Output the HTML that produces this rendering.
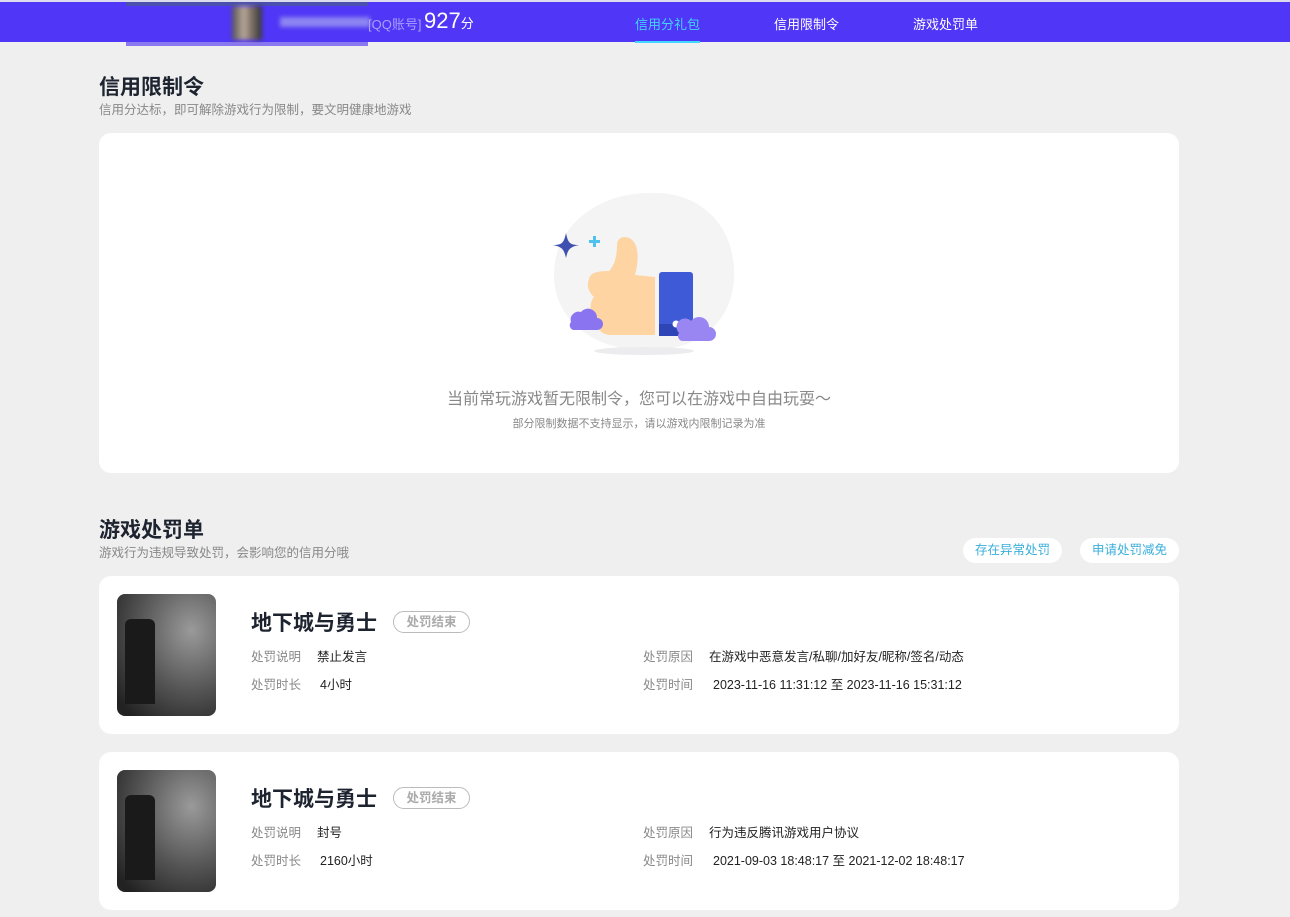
<!DOCTYPE html>
<html><head><meta charset="utf-8"><style>
*{margin:0;padding:0;box-sizing:border-box}
body{width:1290px;height:917px;overflow:hidden;background:#efefef;font-family:"Liberation Sans","Noto Sans CJK SC",sans-serif;color:#222}
.nav{position:absolute;left:0;top:0;width:1290px;height:42px;background:#5036f6;border-top:2px solid #dcdcec}
.nav .ul{position:absolute;left:126px;top:0;width:242px;height:4px;background:#4a4fb0}
.nav .ul2{position:absolute;left:126px;top:40px;width:242px;height:4px;background:#8a78f0}
.av{position:absolute;left:232px;top:4px;width:30px;height:34px;background:linear-gradient(90deg,#555 0,#b8a898 40%,#8a7a70 60%,#333 100%);filter:blur(2px)}
.nm{position:absolute;left:280px;top:15px;width:90px;height:10px;background:#8d85f2;filter:blur(2px)}
.qq{position:absolute;left:368px;top:12px;font-size:13px;color:#a9a0ff}
.sc{position:absolute;left:424px;top:6px;font-size:22px;color:#fff}
.sc small{font-size:13px}
.tab{position:absolute;top:12px;font-size:13px;color:#fff}
.tab.a{color:#41d6ff}
.tab.a:after{content:"";position:absolute;left:0;right:0;top:27px;height:2px;background:#41d6ff}
h2{position:absolute;left:99px;font-size:21px;font-weight:bold;color:#1d2430}
.sub{position:absolute;left:99px;font-size:12.5px;color:#888}
.card{position:absolute;left:99px;width:1080px;background:#fff;border-radius:12px}
.btn{position:absolute;top:538px;height:25px;background:#fff;border-radius:13px;font-size:12.5px;color:#3aaedb;line-height:25px;text-align:center}
.cover{position:absolute;left:18px;top:18px;width:99px;height:122px;border-radius:8px;background:radial-gradient(ellipse at 75% 30%,#9a9a9a,#555 50%,#222 90%)}
.cover:before{content:"";position:absolute;left:8px;top:25px;width:30px;height:85px;background:#1a1a1a;border-radius:6px 6px 0 0}
.gt{position:absolute;left:152px;top:31px;font-size:21px;font-weight:bold;color:#1d2430}
.tag{position:absolute;left:294px;top:35px;width:77px;height:22px;border:1px solid #bbb;border-radius:11px;font-size:12.5px;color:#aaa;text-align:center;line-height:20px;font-weight:bold}
.l{position:absolute;font-size:12.5px;color:#888}
.v{position:absolute;font-size:12.5px;color:#222}
</style></head><body>
<div class="nav"><div class="ul"></div><div class="ul2"></div><div class="av"></div><div class="nm"></div>
<div class="qq">[QQ账号]</div><div class="sc">927<small>分</small></div>
<div class="tab a" style="left:635px">信用分礼包</div><div class="tab" style="left:774px">信用限制令</div><div class="tab" style="left:913px">游戏处罚单</div></div>

<h2 style="top:71px">信用限制令</h2>
<div class="sub" style="top:99px">信用分达标，即可解除游戏行为限制，要文明健康地游戏</div>
<div class="card" style="top:133px;height:340px">
<svg style="position:absolute;left:450px;top:52px" width="190" height="180" viewBox="0 0 190 180">
<path d="M5 90 C5 40 50 8 100 8 C150 5 188 40 185 95 C182 140 145 168 95 165 C45 165 5 135 5 90Z" fill="#f4f4f5"/>
<ellipse cx="95" cy="166" rx="50" ry="4" fill="#ececee"/>
<path d="M17 48 C19 58 21 60 30 60 C21 62 19 64 17 73 C15 64 13 62 4 60 C13 60 15 58 17 48Z" fill="#3e4fb0"/>
<path d="M40 55 h4 v-4 h3 v4 h4 v3 h-4 v4 h-3 v-4 h-4z" fill="#4ec2ef"/>
<path d="M40 95 C40 88 48 86 60 86 C66 80 68 70 68 60 C68 52 76 50 82 54 C90 60 90 75 86 90 L106 92 L106 150 L62 150 C52 150 46 142 48 134 C40 128 40 118 45 112 C38 106 38 98 40 95Z" fill="#fdd4a2"/>
<rect x="110" y="87" width="34" height="64" rx="3" fill="#3f5ad6"/>
<rect x="110" y="139" width="34" height="12" fill="#2e45b8"/>
<circle cx="127" cy="139" r="3.5" fill="#fff"/>
<path d="M22 137 a8 8 0 0 1 10 -10 a9 9 0 0 1 16 6 a6 6 0 0 1 0 12 h-24 a5 5 0 0 1 -2 -8z" fill="#8b74f0"/>
<path d="M130 148 a8 8 0 0 1 12 -12 a10 10 0 0 1 18 6 a7 7 0 0 1 0 14 h-26 a5 5 0 0 1 -4 -8z" fill="#9a86f3"/>
</svg>
<div style="position:absolute;left:0;right:0;top:252px;text-align:center;font-size:16px;color:#888">当前常玩游戏暂无限制令，您可以在游戏中自由玩耍～</div>
<div style="position:absolute;left:0;right:0;top:282px;text-align:center;font-size:11px;color:#888">部分限制数据不支持显示，请以游戏内限制记录为准</div>
</div>

<h2 style="top:514px">游戏处罚单</h2>
<div class="sub" style="top:542px">游戏行为违规导致处罚，会影响您的信用分哦</div>
<div class="btn" style="left:963px;width:99px">存在异常处罚</div>
<div class="btn" style="left:1080px;width:99px">申请处罚减免</div>

<div class="card" style="top:576px;height:158px">
<div class="cover"></div><div class="gt">地下城与勇士</div><div class="tag">处罚结束</div>
<div class="l" style="left:152px;top:70px">处罚说明</div><div class="v" style="left:218px;top:70px">禁止发言</div>
<div class="l" style="left:152px;top:98px">处罚时长</div><div class="v" style="left:221px;top:98px">4小时</div>
<div class="l" style="left:544px;top:70px">处罚原因</div><div class="v" style="left:610px;top:70px">在游戏中恶意发言/私聊/加好友/昵称/签名/动态</div>
<div class="l" style="left:544px;top:98px">处罚时间</div><div class="v" style="left:614px;top:98px">2023-11-16 11:31:12 至 2023-11-16 15:31:12</div>
</div>

<div class="card" style="top:752px;height:158px">
<div class="cover"></div><div class="gt">地下城与勇士</div><div class="tag">处罚结束</div>
<div class="l" style="left:152px;top:70px">处罚说明</div><div class="v" style="left:218px;top:70px">封号</div>
<div class="l" style="left:152px;top:98px">处罚时长</div><div class="v" style="left:221px;top:98px">2160小时</div>
<div class="l" style="left:544px;top:70px">处罚原因</div><div class="v" style="left:610px;top:70px">行为违反腾讯游戏用户协议</div>
<div class="l" style="left:544px;top:98px">处罚时间</div><div class="v" style="left:614px;top:98px">2021-09-03 18:48:17 至 2021-12-02 18:48:17</div>
</div>
</body></html>
